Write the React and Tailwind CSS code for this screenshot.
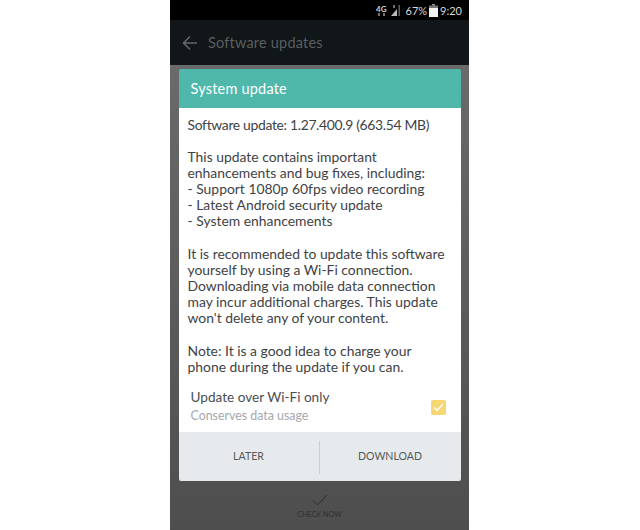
import React from "react";

const font = { fontFamily: '"Lato", "Noto Sans", sans-serif' };

function Para({ lines, className = "" }) {
  return (
    <div className={className}>
      {lines.map((l) => (
        <div key={l} className="h-[16px] leading-[16px] whitespace-nowrap">{l}</div>
      ))}
    </div>
  );
}

export default function App() {
  return (
    <div className="w-[640px] h-[530px] bg-white flex justify-center overflow-hidden" style={font}>
      <div className="w-[299px] h-[530px] flex flex-col ml-[-1px]">
        <div className="h-[20px] bg-black flex items-center justify-end pr-[7px] gap-[2px] text-[#d8d8d8]">
          <div className="flex flex-col items-center leading-none mr-[1px]">
            <span className="text-[8px] font-bold leading-[8px] text-[#cfcfcf]">4G</span>
            <svg width="9" height="3" viewBox="0 0 9 3"><path d="M2 0v3M7 0v3" stroke="#999" strokeWidth="1.5" /></svg>
          </div>
          <svg width="11" height="12" viewBox="0 0 11 12" className="mr-[3px]">
            <path d="M1 12 L7 5 V12Z" fill="#bbb" />
            <path d="M8.5 1h1.4v11H8.5z" fill="#666" />
            <path d="M3.5 1h1v3h-1z" fill="#ddd" />
          </svg>
          <span className="text-[11px] leading-none">67%</span>
          <svg width="9" height="13" viewBox="0 0 9 13">
            <path d="M3 0h3v1.5H3z" fill="#999" />
            <path d="M0 1.5h9V4H0z" fill="#777" />
            <path d="M0 4h9v9H0z" fill="#f2f2f2" />
          </svg>
          <span className="text-[11px] leading-none">9:20</span>
        </div>
        <div className="h-[45px] bg-[#111618] flex items-center pl-[12px] text-[#5b5f61]">
          <svg width="16" height="16" viewBox="0 0 16 16" fill="none" stroke="#63676a" strokeWidth="1.6">
            <path d="M15 8H1.5M8 1.5 1.5 8 8 14.5" />
          </svg>
          <span className="ml-[10px] text-[14.5px] tracking-[0.2px]">Software updates</span>
        </div>
        <div className="flex-1 flex flex-col items-center bg-gradient-to-b from-[#6a6a6a] to-[#4e4e4e] pt-[4px]">
          <div className="w-[282px] flex flex-col rounded-[2px] overflow-hidden">
            <div className="h-[39px] bg-[#4fb8ab] flex items-center pl-[12px] text-white text-[14.5px] tracking-[0.2px]">
              System update
            </div>
            <div className="h-[324px] bg-white pl-[9px] pt-[9px] text-[13.9px] text-[#3e4245]">
              <div className="h-[16px] leading-[16px] whitespace-nowrap tracking-[-0.32px]">Software update: 1.27.400.9 (663.54 MB)</div>
              <Para className="mt-[16px]" lines={["This update contains important", "enhancements and bug fixes, including:", "- Support 1080p 60fps video recording", "- Latest Android security update", "- System enhancements"]} />
              <Para className="mt-[17px]" lines={["It is recommended to update this software", "yourself by using a Wi-Fi connection.", "Downloading via mobile data connection", "may incur additional charges. This update", "won't delete any of your content."]} />
              <Para className="mt-[17px]" lines={["Note: It is a good idea to charge your", "phone during the update if you can."]} />
              <div className="flex items-center justify-between pl-[3px] pr-[15px] mt-[14px]">
                <div>
                  <div className="text-[13.6px] leading-[17px] text-[#4a4e51]">Update over Wi-Fi only</div>
                  <div className="text-[12.4px] leading-[19px] text-[#a3a8ac]">Conserves data usage</div>
                </div>
                <div className="w-[15px] h-[15px] rounded-[2px] bg-[#f7d774] flex items-center justify-center mt-[1px]">
                  <svg width="11" height="9" viewBox="0 0 11 9" fill="none" stroke="#fff" strokeWidth="1.4"><path d="M1 4.5 4 7.5 10 1" /></svg>
                </div>
              </div>
            </div>
            <div className="h-[49px] bg-[#e7eaec] flex items-center pt-[1px] text-[10.6px] text-[#55595c]">
              <div className="w-[140px] text-center">LATER</div>
              <div className="w-px h-[33px] bg-[#cdd0d2]"></div>
              <div className="flex-1 text-center">DOWNLOAD</div>
            </div>
          </div>
          <div className="flex flex-col items-center mt-[13px]">
            <svg width="16" height="12" viewBox="0 0 16 12" fill="none" stroke="#2b2b2b" strokeWidth="1"><path d="M1 6.5 5.5 11 15 1" /></svg>
            <span className="text-[7.2px] leading-[10px] mt-[4px] text-[#2f2f2f]">CHECK NOW</span>
          </div>
        </div>
      </div>
    </div>
  );
}
